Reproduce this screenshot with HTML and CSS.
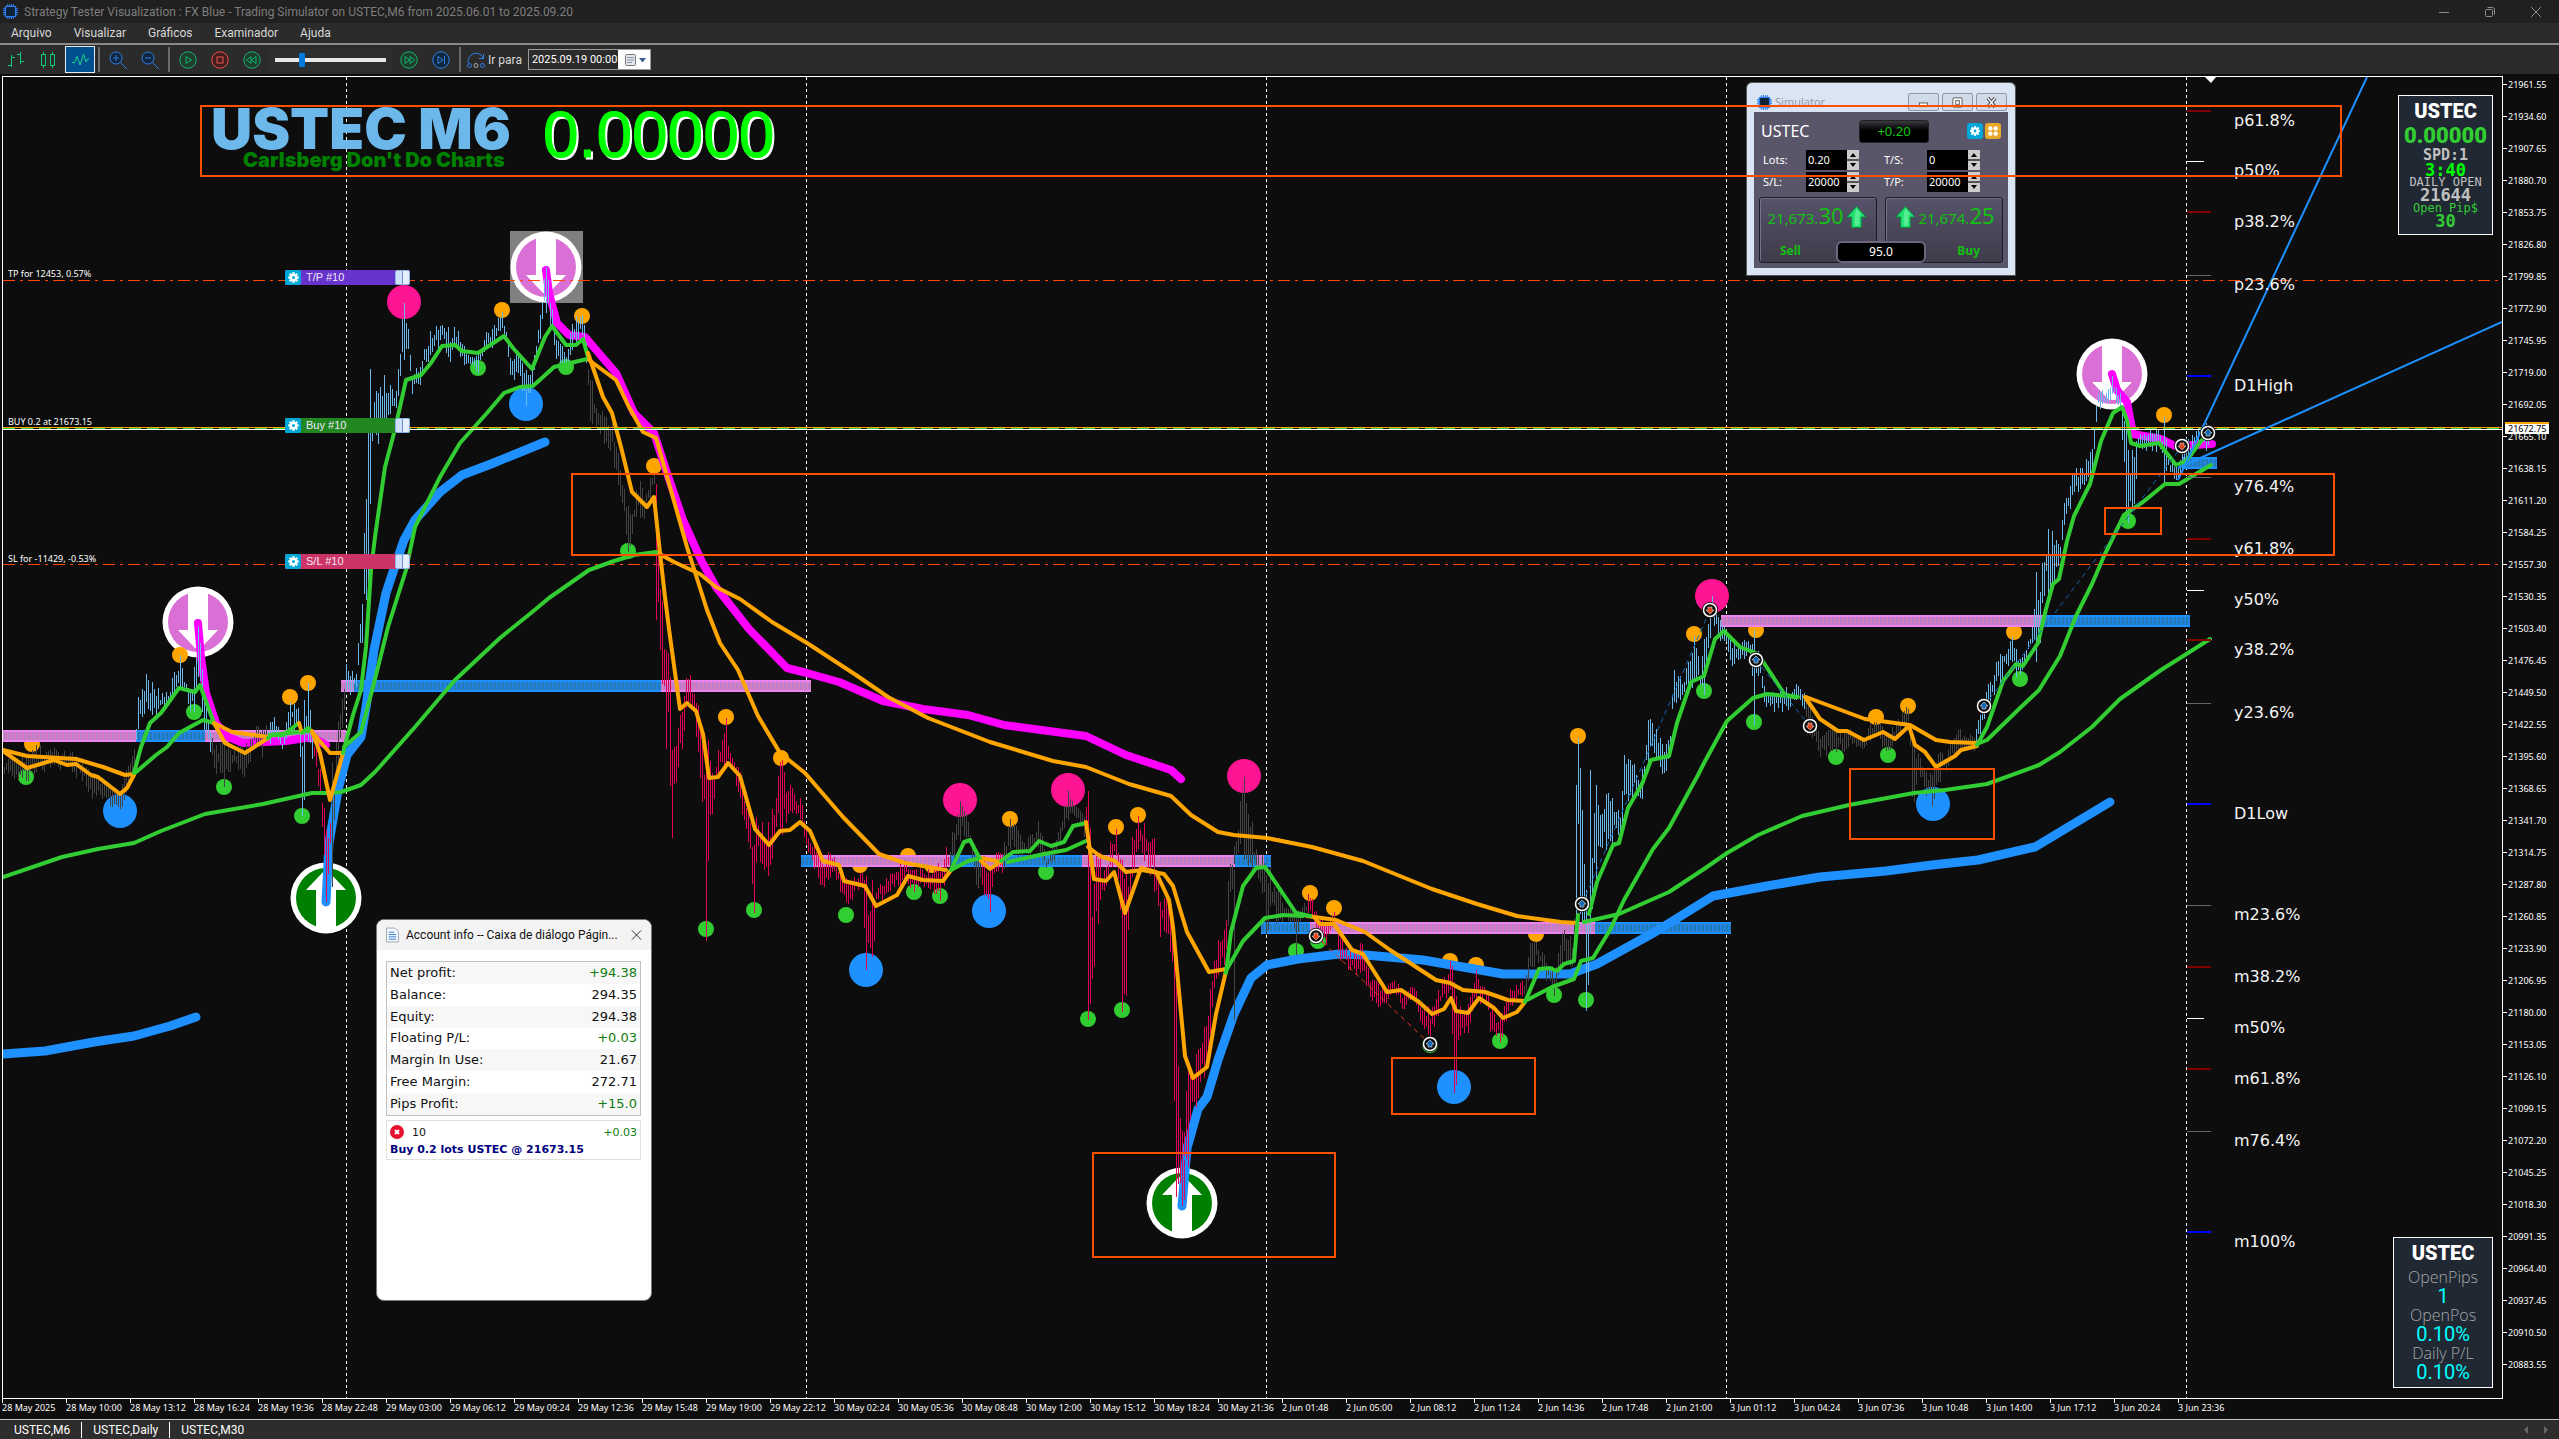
FILE: index.html
```html
<!DOCTYPE html>
<html lang="pt">
<head>
<meta charset="utf-8">
<title>Strategy Tester Visualization</title>
<link rel="stylesheet" href="styles.css">
</head>
<body>
<svg class="defs" width="0" height="0" aria-hidden="true">
  <symbol id="i-chip" viewBox="0 0 16 16"><path d="M5 0v16M7 0v16M9 0v16M11 0v16M0 5h16M0 7h16M0 9h16M0 11h16" stroke="#2f7ff0" stroke-width="1"/><rect x="2.5" y="2.500" width="11" height="11" rx="1" fill="#0d2238" stroke="#2f7ff0" stroke-width="1.500"/></symbol>
  <symbol id="i-gear" viewBox="0 0 16 16"><path d="M8 2.500v11M2.500 8h11M4 4l8 8M12 4l-8 8" stroke="#fff" stroke-width="2.600"/><circle cx="8" cy="8" r="3.800" fill="#fff"/><circle cx="8" cy="8" r="1.600" fill="#00a8d8"/></symbol>
  <symbol id="i-down" viewBox="-36 -36 72 72"><circle r="35.500" fill="#fff"/><circle r="30" fill="#da70d6"/><path d="M-10-34H10V8H20L3 26H-3L-20 8H-10Z" fill="#fff"/></symbol>
  <symbol id="i-up" viewBox="-36 -36 72 72"><circle r="35.500" fill="#fff"/><circle r="30" fill="#008000"/><path d="M-10 34H10V-8H20L3-26H-3L-20-8H-10Z" fill="#fff"/></symbol>
  <symbol id="i-price" viewBox="0 0 22 24"><path d="M11 1L21 12H16V23H6V12H1Z" fill="#1fe070" stroke="#0c8a3c"/><path d="M11 3L16 9H14V21H9V10Z" fill="#7df5a8" opacity=".6"/></symbol>
</svg>

<header class="titlebar">
  <svg class="app-icon"><use href="#i-chip"/></svg>
  <h1>Strategy Tester Visualization : FX Blue - Trading Simulator on USTEC,M6 from 2025.06.01 to 2025.09.20</h1>
  <div class="window-buttons">
    <button type="button" aria-label="Minimizar"><svg viewBox="0 0 12 12"><path d="M1 6.500h10"/></svg></button>
    <button type="button" aria-label="Restaurar"><svg viewBox="0 0 12 12"><rect x="1.500" y="3.500" width="7" height="7" rx="1"/><path d="M3.500 1.500h5a2 2 0 0 1 2 2v5"/></svg></button>
    <button type="button" aria-label="Fechar"><svg viewBox="0 0 12 12"><path d="M1 1l10 10M11 1L1 11"/></svg></button>
  </div>
</header>

<nav class="menu">
  <a href="#">Arquivo</a><a href="#">Visualizar</a><a href="#">Gráficos</a><a href="#">Examinador</a><a href="#">Ajuda</a>
</nav>

<div class="toolbar">
  <button type="button" class="tool" aria-label="Barras"><svg viewBox="0 0 20 20" stroke="#0fc97a"><path d="M5.500 5v12M2 15.500h3M5.500 7.500H9M14.500 2v12M11 4.500h3M14.500 11.500H18"/></svg></button>
  <button type="button" class="tool" aria-label="Velas"><svg viewBox="0 0 20 20" stroke="#0fc97a"><path d="M5.500 2v16M14.500 2v16"/><rect x="3.500" y="4.500" width="4" height="11" fill="#2b2b2b"/><rect x="12.500" y="4.500" width="4" height="11" fill="#2b2b2b"/></svg></button>
  <button type="button" class="tool active" aria-label="Linha"><svg viewBox="0 0 20 20" stroke="#1ed08a"><path d="M2 12.500h2.500L7 6.500 10 15 13.500 4.500 16 12l1.500-3H19"/></svg></button>
  <i class="sep"></i>
  <button type="button" class="tool" aria-label="Ampliar"><svg viewBox="0 0 20 20" stroke="#2f7fe8"><circle cx="8" cy="8" r="6" fill="#10263c"/><path d="M5 8h6M8 5v6M12.500 12.500L19 19"/></svg></button>
  <button type="button" class="tool" aria-label="Reduzir"><svg viewBox="0 0 20 20" stroke="#2f7fe8"><circle cx="8" cy="8" r="6" fill="#10263c"/><path d="M5 8h6M12.500 12.500L19 19"/></svg></button>
  <i class="sep"></i>
  <button type="button" class="tool" aria-label="Iniciar"><svg viewBox="0 0 20 20" stroke="#12b56e"><circle cx="10" cy="10" r="8.200" fill="#1f3d2c"/><path d="M8 6.500v7l5.500-3.500z"/></svg></button>
  <button type="button" class="tool" aria-label="Parar"><svg viewBox="0 0 20 20" stroke="#f0524f"><circle cx="10" cy="10" r="8.200" fill="#40201f"/><rect x="7" y="7" width="6" height="6"/></svg></button>
  <button type="button" class="tool" aria-label="Mais lento"><svg viewBox="0 0 20 20" stroke="#12b56e"><circle cx="10" cy="10" r="8.200" fill="#1f3d2c"/><path d="M9 6.500v7L4.500 10zM14 6.500v7L9.500 10z"/></svg></button>
  <label class="speed"><input type="range" min="0" max="100" value="23" aria-label="Velocidade"></label>
  <button type="button" class="tool" aria-label="Mais rápido"><svg viewBox="0 0 20 20" stroke="#12b56e"><circle cx="10" cy="10" r="8.200" fill="#1f3d2c"/><path d="M6 6.500v7l4.500-3.500zM11 6.500v7l4.500-3.500z"/></svg></button>
  <button type="button" class="tool" aria-label="Até o fim"><svg viewBox="0 0 20 20" stroke="#2f7fe8"><circle cx="10" cy="10" r="8.200" fill="#10263c"/><path d="M7 6.500v7l5-3.500zM13.500 6v8"/></svg></button>
  <i class="sep"></i>
  <label class="goto" for="goto"><svg viewBox="0 0 20 20" stroke="#2f7fe8" fill="none"><path d="M2 13C2 1 15 1 17 8M17.500 4v4.500H13"/><circle cx="3.500" cy="15.500" r="2"/><circle cx="10" cy="15.500" r="2" stroke="#aaa"/><circle cx="16.500" cy="15.500" r="2"/></svg>Ir para</label>
  <span class="datebox"><input id="goto" type="text" value="2025.09.19 00:00"><button type="button" aria-label="Calendário"><svg viewBox="0 0 30 18"><rect x="6.500" y="3.500" width="10" height="11" rx="1" fill="#e4e8ee" stroke="#777"/><path d="M8 6.500h7M8 9h7M8 11.500h5" stroke="#8a93a0"/><path d="M20 7h7l-3.500 4.500z" fill="#3b5f95"/></svg></button></span>
</div>

<main class="chart">
  <section class="plot">
    <svg class="canvas" viewBox="3 77 2499 1321" id="canvas">
      <defs>
        <pattern id="hatch-pink" width="4" height="12" patternUnits="userSpaceOnUse"><rect width="4" height="12" fill="#cf7fd2"/><path d="M1 0v12" stroke="#a67fc9"/><path d="M3 0v12" stroke="#dd7aae"/></pattern>
        <pattern id="hatch-blue" width="4" height="12" patternUnits="userSpaceOnUse"><rect width="4" height="12" fill="#2078cc"/><path d="M1 0v12" stroke="#1e90ff"/><path d="M3 0v12" stroke="#2a7f9c"/></pattern>
      </defs>
      <path class="day" d="M346.500 77V1398M806.500 77V1398M1266.500 77V1398M1726.500 77V1398M2186.500 77V1398"/>
      <path d="M2205 77h11l-5 6z" fill="#fff"/>
      <rect x="510" y="231" width="73" height="72" fill="#808080"/>
      <g id="signals">
        <use href="#i-down" x="162" y="586" width="72" height="72"/>
        <use href="#i-down" x="510" y="231" width="72" height="72"/>
        <use href="#i-down" x="2076" y="338" width="72" height="72"/>
        <use href="#i-up" x="290" y="862" width="72" height="72"/>
        <use href="#i-up" x="1146" y="1167" width="72" height="72"/>
      </g>
      <path class="stop" d="M3 280.500H2502M3 564.500H2502"/>
      <g id="dots"></g>
      <g id="bands"></g>
      <g id="blue-back" class="trend"></g>
      <g id="wicks"></g>
      <g id="averages" class="avg"></g>
      <path d="M3 427.500H2502" stroke="#ffa500"/><path d="M3 428.500H2502" stroke="#32cd32" stroke-dasharray="12 6"/><path d="M3 429.500H2502" stroke="#fff"/>
      <path d="M2178 480L2367 77M2178 468L2502 322" stroke="#1e90ff" stroke-width="2"/>
      <path d="M1316 936L1430 1044" stroke="#e0401a" stroke-dasharray="5 4"/>
      <path d="M1582 904L1710 610M1756 660L1810 726M1984 706L2182 446" stroke="#1464b4" stroke-dasharray="5 4"/>
      <g id="trades"></g>
      <g id="levels" class="levels"></g>
      <g class="note">
        <text x="8" y="277">TP for 12453, 0.57%</text>
        <text x="8" y="425">BUY 0.2 at 21673.15</text>
        <text x="8" y="562">SL for -11429, -0.53%</text>
      </g>
      <text class="symbol" x="211" y="149">USTEC M6</text>
      <text class="motto" x="243" y="167">Carlsberg Don't Do Charts</text>
      <text class="points points-back" x="545" y="159">0.00000</text>
      <text class="points" x="543" y="157">0.00000</text>
    </svg>

    <div class="order order-tp"><button type="button" aria-label="Opções"><svg><use href="#i-gear"/></svg></button><span>T/P #10</span><i></i></div>
    <div class="order order-buy"><button type="button" aria-label="Opções"><svg><use href="#i-gear"/></svg></button><span>Buy #10</span><i></i></div>
    <div class="order order-sl"><button type="button" aria-label="Opções"><svg><use href="#i-gear"/></svg></button><span>S/L #10</span><i></i></div>

    <aside class="panel panel-top">
      <b class="head">USTEC</b><b class="pts">0.00000</b><b class="spd">SPD:1</b><b class="clock">3:40</b><span class="small">DAILY OPEN</span><b class="open">21644</b><span class="small green">Open Pip$</span><b class="open green">30</b>
    </aside>

    <aside class="panel panel-bottom">
      <b class="head">USTEC</b><span class="name">OpenPips</span><span class="lcd">1</span><span class="name">OpenPos</span><span class="lcd">0.10%</span><span class="name">Daily P/L</span><span class="lcd">0.10%</span>
    </aside>

    <section class="sim">
      <header><svg class="app-icon"><use href="#i-chip"/></svg><h2>Simulator</h2>
        <button type="button" aria-label="Minimizar"><svg viewBox="0 0 12 12"><rect x="1.500" y="6.500" width="9" height="4" fill="#fff" stroke="#555"/></svg></button>
        <button type="button" aria-label="Maximizar"><svg viewBox="0 0 12 12"><rect x="1" y="1" width="10" height="10" fill="#fff" stroke="#555" rx="1"/><rect x="4" y="4" width="4" height="4" fill="#fff" stroke="#555"/></svg></button>
        <button type="button" aria-label="Fechar"><svg viewBox="0 0 12 12"><path d="M2 1l8 10M10 1L2 11" stroke="#555" stroke-width="4"/><path d="M2 1l8 10M10 1L2 11" stroke="#fff" stroke-width="1.500"/></svg></button>
      </header>
      <form class="sim-body">
        <div class="sim-top"><strong>USTEC</strong><output>+0.20</output><button type="button" class="opt" aria-label="Opções"><svg><use href="#i-gear"/></svg></button><button type="button" class="opt grid" aria-label="Grade"><svg viewBox="0 0 16 16"><circle cx="5" cy="5" r="2.500"/><circle cx="11" cy="5" r="2.500"/><circle cx="5" cy="11" r="2.500"/><circle cx="11" cy="11" r="2.500"/></svg></button></div>
        <div class="sim-fields">
          <label for="lots">Lots:</label><span class="spin"><input id="lots" type="text" value="0.20"><svg viewBox="0 0 12 20"><path d="M0 0h12v9H0zM0 11h12v9H0z" fill="#ccc"/><path d="M6 3l3 4H3zM6 17l3-4H3z" fill="#000"/></svg></span>
          <label for="ts">T/S:</label><span class="spin"><input id="ts" type="text" value="0"><svg viewBox="0 0 12 20"><path d="M0 0h12v9H0zM0 11h12v9H0z" fill="#ccc"/><path d="M6 3l3 4H3zM6 17l3-4H3z" fill="#000"/></svg></span>
          <label for="sl">S/L:</label><span class="spin"><input id="sl" type="text" value="20000"><svg viewBox="0 0 12 20"><path d="M0 0h12v9H0zM0 11h12v9H0z" fill="#ccc"/><path d="M6 3l3 4H3zM6 17l3-4H3z" fill="#000"/></svg></span>
          <label for="tp">T/P:</label><span class="spin"><input id="tp" type="text" value="20000"><svg viewBox="0 0 12 20"><path d="M0 0h12v9H0zM0 11h12v9H0z" fill="#ccc"/><path d="M6 3l3 4H3zM6 17l3-4H3z" fill="#000"/></svg></span>
        </div>
        <div class="sim-deal">
          <button type="button" class="sell"><span class="quote">21,673.<big>30</big><svg><use href="#i-price"/></svg></span><b>Sell</b></button>
          <button type="button" class="buy"><span class="quote"><svg><use href="#i-price"/></svg>21,674.<big>25</big></span><b>Buy</b></button>
          <output class="spread">95.0</output>
        </div>
      </form>
    </section>

    <section class="account">
      <header><svg viewBox="0 0 14 16"><path d="M.5.500h9l4 4v11H.5z" fill="#f4f8fc" stroke="#9aa4ae"/><path d="M3 5h6M3 7.500h8M3 10h8M3 12.500h8" stroke="#2a78c8"/></svg><h2>Account info -- Caixa de diálogo Págin...</h2><button type="button" aria-label="Fechar"><svg viewBox="0 0 12 12"><path d="M1 1l10 10M11 1L1 11" stroke="#222"/></svg></button></header>
      <table>
        <tr><th>Net profit:</th><td class="up">+94.38</td></tr>
        <tr><th>Balance:</th><td>294.35</td></tr>
        <tr><th>Equity:</th><td>294.38</td></tr>
        <tr><th>Floating P/L:</th><td class="up">+0.03</td></tr>
        <tr><th>Margin In Use:</th><td>21.67</td></tr>
        <tr><th>Free Margin:</th><td>272.71</td></tr>
        <tr><th>Pips Profit:</th><td class="up">+15.0</td></tr>
      </table>
      <div class="position"><p><svg viewBox="0 0 14 14"><circle cx="7" cy="7" r="7" fill="#e8112d"/><path d="M5 5l4 4M9 5l-4 4" stroke="#fff" stroke-width="2"/></svg><span>10</span><em>+0.03</em></p><b>Buy 0.2 lots USTEC @ 21673.15</b></div>
    </section>

    <svg class="canvas zones" viewBox="3 77 2499 1321"><g id="zones"></g></svg>
  </section>
  <div class="prices"><ol id="prices"></ol><span class="last">21672.75</span></div>
  <ol class="times" id="times"></ol>
</main>

<footer class="tabs"><a href="#">USTEC,M6</a><a href="#">USTEC,Daily</a><a href="#">USTEC,M30</a><span class="arrows"><button type="button" aria-label="Anterior"><svg viewBox="0 0 6 8"><path d="M5 0v8L1 4z"/></svg></button><button type="button" aria-label="Próximo"><svg viewBox="0 0 6 8"><path d="M1 0v8l4-4z"/></svg></button></span></footer>
<script src="chart.js"></script>
</body>
</html>
```

FILE: styles.css
```css
* { box-sizing: border-box; }
html, body { height: 100%; }
body { margin: 0; display: flex; flex-direction: column; background: #0d0d0d; color: #fff; font: 12px/16px Roboto, "Open Sans", sans-serif; overflow: hidden; }
button { border: 0; padding: 0; margin: 0; background: none; color: inherit; font: inherit; display: flex; align-items: center; justify-content: center; }
input { font: inherit; color: inherit; border: 0; padding: 0; margin: 0; min-width: 0; }
h1, h2, p, ol { margin: 0; padding: 0; font: inherit; list-style: none; }
a { color: inherit; text-decoration: none; }
svg { fill: none; display: block; flex: none; }
.defs { position: absolute; }

.titlebar { height: 23px; flex: none; display: flex; align-items: center; gap: 6px; padding-left: 3px; background: #202020; color: #7d7d7d; }
.app-icon { width: 15px; height: 15px; }
.titlebar h1 { flex: 1; }
.window-buttons { display: flex; }
.window-buttons button { width: 46px; height: 20px; }
.window-buttons svg { width: 12px; height: 12px; stroke: #8c8c8c; }
.menu { height: 20px; flex: none; display: flex; gap: 22px; padding: 2px 11px; background: #2b2b2b; color: #d8d8d8; }
.toolbar { height: 31px; flex: none; display: flex; align-items: center; padding-left: 1px; gap: 2px; background: #2b2b2b; border-top: 2px solid #8a8a8a; }
.tool { width: 30px; height: 27px; }
.tool svg { width: 20px; height: 20px; }
.tool.active { background: #00508f; border: 1px solid #e8e8e8; }
.sep { width: 2px; height: 25px; background: #6a6a6a; margin: 0 1px; }
.speed { width: 123px; padding: 0 6px; display: flex; align-items: center; background: #2e2e2e; height: 22px; }
.speed input { appearance: none; width: 111px; height: 14px; background: none; }
.speed input::-webkit-slider-runnable-track { height: 4px; background: #e6e6e6; }
.speed input::-webkit-slider-thumb { appearance: none; width: 6px; height: 14px; margin-top: -5px; background: #0078d7; }
.goto { display: flex; align-items: center; gap: 2px; margin: 0 4px 0 2px; color: #d8d8d8; }
.goto svg { width: 20px; height: 20px; }
.datebox { display: flex; width: 123px; height: 21px; border: 1px solid #9a9a9a; }
.datebox input { flex: 1; padding-left: 3px; background: #2b2b2b; font-size: 11px; }
.datebox button { width: 32px; background: #fff; }
.datebox svg { width: 30px; height: 18px; }

.chart { flex: 1; min-height: 0; display: grid; grid-template: minmax(0, 1fr) 20px / minmax(0, 1fr) 56px; padding: 2px 0 0 2px; font: 9px/17px "Noto Sans", sans-serif; }
.plot { position: relative; border: 1px solid #fff; overflow: hidden; }
.canvas { width: 100%; height: 100%; }
.zones { position: absolute; inset: 0; pointer-events: none; }
.day { stroke: #fff; stroke-dasharray: 3 3; }
.stop { stroke: #ff4500; stroke-dasharray: 12 5 3 5; }
.trend path { stroke: #1e90ff; stroke-width: 9; stroke-linecap: round; stroke-linejoin: round; }
.trend .sell-trend { stroke: #f0f; stroke-width: 8; }
.avg path { stroke-width: 4; stroke-linejoin: round; stroke-linecap: round; }
.avg .rise { stroke: #32cd32; }
.avg .fall { stroke: #ffa500; }
.levels text { font: 16px "DejaVu Sans", sans-serif; fill: #f4f4f4; }
.note text { font: 9px "Noto Sans", sans-serif; fill: #fff; }
.symbol { font: 900 57px Inter, sans-serif; fill: #6cb8ea; }
.motto { font: 900 20px Inter, sans-serif; fill: #008000; }
.points { font: 64px "Liberation Sans", sans-serif; fill: #0f0; stroke: #0f0; }
.points-back { fill: #fff; stroke: #fff; }

.order { position: absolute; left: 282px; width: 125px; height: 15px; display: flex; font: 11px/15px "Liberation Sans", sans-serif; color: #f0e8f8; }
.order button { width: 16px; background: #00a8d8; border-radius: 2px; }
.order svg { width: 15px; height: 15px; }
.order span { flex: 1; padding-left: 5px; }
.order i { width: 15px; border: 1px solid #8fb0e8; border-radius: 2px; background: linear-gradient(90deg, #cfe0fa 6px, #6d8fd0 6px 7px, #e4eefc 7px); }
.order-tp { top: 193px; background: #6633cc; }
.order-buy { top: 341px; background: #218721; }
.order-sl { top: 477px; background: #cc3366; }

.panel { position: absolute; display: flex; flex-direction: column; align-items: center; background: #1f2833; border: 1px solid #fff; white-space: nowrap; color: #c0c0c0; font-family: "DejaVu Sans Mono", monospace; }
.panel-top { right: 9px; top: 18px; width: 95px; height: 140px; font-size: 15px; }
.panel-bottom { right: 9px; bottom: 10px; width: 100px; height: 151px; }
.head { font: 900 20px/30px Roboto, sans-serif; color: #fff; }
.pts { font: 900 22px/20px Roboto, sans-serif; color: #32cd32; }
.spd { line-height: 18px; }
.clock { font-size: 17px; line-height: 12px; color: #0f0; }
.small { font-size: 12px; line-height: 13px; }
.open { font-size: 17px; line-height: 13px; }
.panel .green { color: #32cd32; }
.name { font: 300 16px/18px "Open Sans", sans-serif; color: #a8a8a8; }
.lcd { font: 20px/20px Roboto, sans-serif; color: #0ff; }

.sim { position: absolute; left: 1743px; top: 5px; width: 270px; height: 194px; padding: 0 7px 7px; background: #d9e5f2; border: 1px solid #555; border-radius: 6px 6px 0 0; display: flex; flex-direction: column; font: 11px/14px "Noto Sans", sans-serif; }
.sim header { height: 30px; display: flex; align-items: center; gap: 3px; padding: 9px 1px 0 3px; }
.sim h2 { flex: 1; font-size: 11px; color: #909ba8; }
.sim header button { width: 31px; height: 18px; border: 1px solid #8d99a8; border-radius: 2px; background: #cfdbe8; }
.sim header button svg { width: 11px; height: 11px; }
.sim-body { flex: 1; margin: 0; padding: 7px 5px 5px; background: #5a566a; display: flex; flex-direction: column; }
.sim-top { display: flex; align-items: center; height: 24px; padding: 0 2px; gap: 2px; }
.sim-top strong { width: 96px; font: 16px/20px "Noto Sans", sans-serif; }
.sim-top output { width: 70px; height: 23px; margin-right: auto; border: 1px solid #222; border-radius: 3px; background: linear-gradient(#3a3a40, #000 45%); color: #12c012; text-align: center; font: 13px/21px "Noto Sans", sans-serif; }
.opt { width: 16px; height: 16px; border-radius: 3px; background: #00a8d8; }
.opt.grid { background: #e8a828; }
.opt svg { width: 14px; height: 14px; }
.opt.grid svg { fill: #fff; }
.sim-fields { display: grid; grid-template-columns: 43px 78px 43px 1fr; gap: 2px 0; padding: 7px 3px 0 4px; align-items: center; line-height: 20px; }
.spin { display: flex; width: 53px; height: 20px; background: #555; }
.spin input { width: 41px; padding-left: 2px; background: #000; font-size: 11px; }
.spin svg { width: 12px; height: 20px; }
.sim-deal { position: relative; display: flex; gap: 8px; margin-top: 5px; height: 66px; }
.sim-deal > button { flex: 1; flex-direction: column; justify-content: space-between; padding: 3px 4px 3px; border: 1px solid #1c1a26; border-radius: 3px; background: linear-gradient(#56526a, #3f3b4a); color: #12c012; box-shadow: inset 1px 1px #77728c; }
.quote { display: flex; align-items: baseline; font: 15px/28px "Noto Sans", sans-serif; white-space: nowrap; }
.quote big { font-size: 22px; }
.quote svg { width: 21px; height: 24px; align-self: center; margin: 0 2px; }
.sim-deal b { font-size: 12px; line-height: 16px; }
.sell b { align-self: flex-start; margin-left: 16px; }
.buy b { align-self: flex-end; margin-right: 18px; }
.spread { position: absolute; left: 50%; bottom: 0; width: 90px; height: 22px; margin-left: -45px; border: 2px solid #6a6680; border-radius: 6px; background: #000; text-align: center; font: 12px/18px "Noto Sans", sans-serif; }

.account { position: absolute; left: 373px; top: 842px; width: 276px; height: 382px; background: #fff; border: 1px solid #777; border-radius: 8px; color: #111; overflow: hidden; font: 13px/20px "DejaVu Sans", sans-serif; }
.account header { height: 30px; display: flex; align-items: center; padding: 0 9px; background: #f3f3f3; font: 12px/16px Roboto, sans-serif; }
.account header h2 { flex: 1; margin-left: 7px; white-space: nowrap; }
.account header svg { width: 13px; height: 16px; }
.account header button svg { width: 11px; height: 12px; }
.account table { width: 255px; height: 155px; margin: 11px 9px 4px; border: 1px solid #c0c0c0; border-collapse: collapse; }
.account tr:nth-child(odd) { background: #f7f7f7; }
.account th, .account td { padding: 0 3px; font-weight: normal; text-align: left; }
.account td { text-align: right; }
.account .up, .position em { color: #107c10; }
.position { width: 255px; height: 40px; margin-left: 9px; padding: 2px 3px; border: 1px solid #e0e0e0; font-size: 11px; line-height: 17px; }
.position p { display: flex; align-items: center; gap: 8px; height: 18px; }
.position svg { width: 14px; height: 14px; }
.position em { margin-left: auto; font-style: normal; }
.position b { color: #000080; white-space: nowrap; }

.prices { position: relative; overflow: hidden; }
.prices li { height: 32px; display: flex; }
.prices li::before { content: ""; width: 4px; height: 1px; margin: 8px 1px 0 0; background: #fff; }
.last { position: absolute; left: 2px; top: 346px; width: 44px; height: 12px; padding-left: 3px; border-top: 2px solid #ffa500; background: #fff; color: #000; line-height: 10px; }
.times { grid-column: 1 / -1; display: flex; overflow: hidden; }
.times li { flex: none; width: 64px; white-space: nowrap; background: linear-gradient(#fff, #fff) 0 0 / 1px 4px no-repeat; }

.tabs { height: 20px; flex: none; display: flex; align-items: center; border-top: 1px solid #c8c8c8; background: #2d2d2d; padding-left: 3px; }
.tabs a { padding: 0 11px; }
.tabs a + a { border-left: 1px solid #fff; }
.arrows { margin-left: auto; display: flex; gap: 14px; padding-right: 10px; }
.arrows svg { width: 6px; height: 8px; fill: #666; }
```

FILE: chart.js
```js
const byId = id => document.getElementById(id);
const fill = (id, html) => { byId(id).innerHTML = html; };

// Price scale: one label every 26.95 points.
fill("prices", Array.from({ length: 41 }, (_, i) => `<li>${(21961.55 - 26.95 * i).toFixed(2)}</li>`).join(""));

fill("times", ("28 May 2025|28 May 10:00|28 May 13:12|28 May 16:24|28 May 19:36|28 May 22:48|29 May 03:00|29 May 06:12|29 May 09:24|29 May 12:36|29 May 15:48|29 May 19:00|29 May 22:12|30 May 02:24|30 May 05:36|30 May 08:48|30 May 12:00|30 May 15:12|30 May 18:24|30 May 21:36|2 Jun 01:48|2 Jun 05:00|2 Jun 08:12|2 Jun 11:24|2 Jun 14:36|2 Jun 17:48|2 Jun 21:00|3 Jun 01:12|3 Jun 04:24|3 Jun 07:36|3 Jun 10:48|3 Jun 14:00|3 Jun 17:12|3 Jun 20:24|3 Jun 23:36").split("|").map(t => `<li>${t}</li>`).join(""));

// Daily levels: label, y, tick colour.
const levels = [["p61.8%",110,"#800000"],["p50%",161,"#fff"],["p38.2%",211,"#800000"],["p23.6%",275,"#666"],["D1High",375,"#00f"],["y76.4%",477,"#666"],["y61.8%",538,"#800000"],["y50%",590,"#fff"],["y38.2%",639,"#800000"],["y23.6%",703,"#666"],["D1Low",803,"#00f"],["m23.6%",905,"#666"],["m38.2%",966,"#800000"],["m50%",1018,"#fff"],["m61.8%",1068,"#800000"],["m76.4%",1131,"#666"],["m100%",1231,"#00f"]];
fill("levels", levels.map(([t, y, c]) => {
  const thin = c === "#fff" || c === "#666";
  return `<rect x="2187" y="${y}" width="${c === "#fff" ? 17 : 24}" height="${thin ? 1 : 2}" fill="${c}"/><text x="2234" y="${y + (thin ? 15 : 16)}">${t}</text>`;
}).join(""));

const dots = {
  "#ff1493 17": "404,302 960,800 1068,790 1244,776 1712,596",
  "#1e90ff 17": "120,811 526,404 866,970 989,911 1454,1087 1933,804",
  "#ffa500 8": "32,744 180,655 290,697 308,683 502,310 582,316 654,466 726,717 781,758 860,865 908,856 932,865 1010,819 1116,827 1138,815 1310,893 1334,908 1450,961 1476,965 1536,934 1578,736 1694,634 1756,630 1876,717 1908,706 2014,632 2164,415",
  "#32cd32 8": "26,777 194,712 224,787 302,816 478,368 566,367 628,551 706,929 754,910 846,915 914,892 940,896 1046,872 1088,1019 1122,1010 1296,951 1318,941 1430,1045 1500,1041 1554,995 1586,1000 1704,691 1754,722 1836,757 1888,755 2020,679 2128,521"
};
fill("dots", Object.entries(dots).map(([k, pts]) => {
  const [color, r] = k.split(" ");
  return pts.split(" ").map(p => `<circle cx="${p.split(",")[0]}" cy="${p.split(",")[1]}" r="${r}" fill="${color}"/>`).join("");
}).join(""));

// Bands: top, start x, then colour and end x of each part.
const bands = [[730,12,3,"p136 b205 p346"],[680,12,341,"p354 b661 p811"],[855,12,801,"b813 p950 b980 p1003 b1082 p1235 b1257 p1264 b1271"],[922,12,1261,"b1310 p1595 b1731"],[615,12,1721,"p2044 b2190"],[457,12,2182,"b2217"]];
fill("bands", bands.map(([y, h, x, parts]) => parts.split(" ").map(p => {
  const end = +p.slice(1), w = end - x, pink = p[0] === "p";
  const s = `<rect x="${x}" y="${y}" width="${w}" height="${h}" fill="${pink ? "#ee82ee" : "#1e90ff"}"/><rect x="${x}" y="${y + 2}" width="${w}" height="${h - 4}" fill="url(#hatch-${pink ? "pink" : "blue"})"/>`;
  x = end;
  return s;
}).join("")).join(""));

const line = (pts, cls) => `<path class="${cls || ""}" d="M${pts}"/>`;
fill("blue-back", [
  "198,623 201,657 206,693 216,723 228,737 243,743 286,741 312,737 326,745",
  "546,270 549,293 557,323 569,335 585,337 603,358 616,373 634,413 654,433 667,473 683,520 702,562 716,587 749,629 787,668 807,673 839,682 883,701 923,709 968,715 1004,725 1086,736 1126,755 1171,770 1181,779",
  "2112,374 2117,390 2127,402 2133,434 2161,439 2175,446 2212,444"
].map(p => line(p, "sell-trend")).concat([
  "3,1054 45,1051 94,1042 134,1036 170,1026 196,1017",
  "326,902 329,843 338,790 347,755 361,737 366,707 374,650 386,593 395,566 404,540 415,520 440,492 462,475 491,464 545,442",
  "1182,1206 1187,1148 1198,1109 1207,1097 1218,1060 1234,1014 1251,978 1267,965 1298,959 1339,954 1365,955 1423,960 1503,974 1570,974 1597,964 1655,932 1713,896 1767,886 1820,877 1886,871 1932,865 1978,860 2035,847 2110,802"
].map(p => line(p))).join(""));

const averages = [
  "f656,552 674,562 700,574 716,587 740,599 772,622 807,643 856,675 888,697 928,718 990,742 1053,761 1086,767 1129,784 1171,796 1191,815 1218,832 1234,835 1267,838 1312,847 1363,861 1432,889 1477,904 1517,916 1561,922 1577,923",
  "r3,877 62,857 98,849 134,843 161,831 205,814 263,804 312,793 330,793 341,792 361,785 375,772 415,727 455,680 500,638 531,613 549,598 589,570 614,561 634,555 656,552",
  "r1584,922 1619,914 1669,892 1704,869 1727,853 1758,835 1802,816 1849,805 1914,793 1945,790 1987,784 2039,765 2060,752 2092,727 2120,699 2161,670 2188,653 2210,639",
  "f3,750 27,756 76,759 103,767 125,775 134,774",
  "r135,773 156,755 167,747 179,733 203,720 214,723",
  "f214,723 232,732 268,737",
  "r270,735 308,731",
  "f312,732 330,753 343,753",
  "r344,747 361,732 374,683 388,627 406,570 415,527 440,477 460,443 487,413 504,393 520,387 533,386 554,367 587,359",
  "f589,360 616,380 629,407 643,432 656,438 670,487 687,547 707,610 720,643 738,670 758,716 780,753 805,773 843,817 879,854 905,863 946,870",
  "r951,870 968,861 981,858",
  "f981,858 1001,862",
  "r1008,862 1044,854 1066,850 1086,841",
  "f1088,847 1100,856 1115,861 1126,872 1142,870 1164,874 1173,886 1187,932 1209,972 1226,969",
  "r1227,969 1243,941 1265,918 1283,915 1303,916",
  "f1307,916 1336,920 1365,932 1390,950 1436,980 1450,983 1463,990 1485,992 1508,1000 1525,1001",
  "r1525,1001 1552,987 1574,979 1581,961 1593,958 1610,930 1624,900 1653,849 1669,828 1698,775 1704,763 1727,721 1753,698 1767,694 1796,697",
  "f1806,697 1865,719 1910,725 1936,740 1950,742 1977,743",
  "r1977,744 1987,740 2019,709 2039,690 2060,656 2076,616 2092,584 2104,556 2124,515 2143,502 2165,484 2179,484 2211,465",
  "f3,751 27,768 54,760 67,765 76,764 91,775 98,777 120,794 127,788 134,775",
  "r134,773 141,747 150,723 161,713 179,688 195,692 200,685 214,723",
  "f214,723 225,743 245,753 268,738",
  "r268,738 272,735 283,735 299,723",
  "f299,723 302,733",
  "r302,733 308,728 312,732",
  "f312,731 320,753 330,800 343,753",
  "r343,753 353,715 361,690 366,647 371,570 375,537 385,467 394,433 400,407 406,380 421,375 431,363 442,346 455,345 462,351 478,353 504,336 513,348 532,369 545,337 552,326 566,345 576,345 583,339 588,357",
  "f588,353 603,397 612,413 621,447 632,492 647,507 654,497 660,553 665,597 669,629 680,709 687,703 696,711 703,734 709,778 718,777 728,763 740,776 755,829 769,845 780,831 790,830 800,822 810,831 823,861 839,865 844,881 865,886 876,906 897,895 908,876 923,880 943,881 951,870",
  "r951,870 964,842 970,840 981,861",
  "f981,861 990,869 1001,861",
  "r1001,861 1013,852 1030,851 1039,841 1051,846 1064,842 1073,826 1086,823",
  "f1086,822 1094,879 1106,881 1114,872 1125,913 1141,868 1156,872 1169,900 1173,927 1185,1056 1193,1078 1207,1067 1216,1014 1226,971",
  "r1226,973 1231,932 1243,886 1256,868 1265,867 1296,913 1310,916",
  "f1314,917 1320,924 1334,924 1352,950 1363,954 1387,992 1401,990 1419,1002 1432,1014 1444,1009 1451,998 1456,1011 1468,1013 1479,998 1494,1008 1503,1018 1517,1012 1525,1002",
  "r1525,1002 1539,969 1550,968 1557,971 1564,964 1574,961 1578,915",
  "r1589,914 1597,882 1613,845 1619,843 1628,808 1642,784 1651,760 1669,756 1677,723 1691,682 1704,676 1715,639 1724,631 1740,647 1758,654 1785,695 1798,697",
  "f1805,697 1820,719 1838,731 1847,731 1864,740 1883,732 1895,739 1909,726 1915,745 1925,752 1936,767 1955,756 1961,750 1977,746",
  "r1977,745 1987,727 2003,681 2016,664 2023,666 2038,643 2046,609 2053,584 2059,579 2067,541 2074,516 2090,484 2101,441 2113,413 2122,407 2127,420 2131,443 2140,446 2159,443 2176,465 2186,461 2202,440"
];
fill("averages", averages.map(a => line(a.slice(1), a[0] === "r" ? "rise" : "fall")).join(""));

// High/low envelope of the bars: x, high, low.
const range = "3,762,775 26,750,780 40,748,775 60,750,768 80,755,778 92,775,798 105,778,800 120,790,812 128,765,790 135,735,760 137,705,740 146,672,705 155,690,715 168,690,710 180,658,682 186,680,700 193,682,716 197,630,680 200,635,700 204,690,735 213,735,775 218,745,770 224,745,786 232,750,765 245,748,780 255,725,740 262,722,755 268,725,745 275,715,735 282,738,755 289,700,725 299,705,735 303,755,820 305,720,750 308,685,740 312,730,760 320,765,800 326,830,900 330,825,850 333,770,860 336,730,790 341,690,730 346,665,700 356,675,690 361,600,650 366,500,600 370,370,520 374,380,460 380,375,430 388,385,420 396,390,410 400,340,390 404,302,360 407,320,350 412,370,395 420,365,385 424,345,370 432,330,350 442,318,345 450,330,360 455,325,350 465,350,365 478,355,372 485,335,350 495,325,345 501,312,330 506,325,345 511,360,380 518,350,375 526,375,405 531,365,390 537,335,360 545,270,310 548,275,310 555,335,355 560,345,365 566,348,370 572,325,350 581,310,330 586,335,370 589,365,415 595,405,425 605,415,445 612,425,450 617,450,490 622,475,500 628,510,552 631,520,540 637,480,510 645,490,525 650,470,500 654,465,490 657,500,600 663,620,700 668,630,760 672,745,830 678,730,770 684,680,730 688,670,700 694,690,710 700,715,780 704,750,810 706,750,928 709,770,840 716,760,780 725,720,760 730,745,765 738,765,790 744,790,830 751,820,860 753,820,910 756,820,860 765,820,870 770,820,880 776,790,840 781,758,830 786,785,820 798,795,820 806,820,845 812,840,870 822,860,890 832,850,875 838,865,885 846,880,915 855,875,890 862,870,890 866,890,968 869,890,940 873,895,955 876,885,905 880,885,900 890,875,890 907,858,880 914,870,893 925,870,885 940,865,897 950,840,870 955,820,860 960,802,840 967,815,835 975,850,880 985,860,900 989,870,910 996,850,870 1003,845,880 1010,820,850 1025,840,860 1038,822,850 1046,855,873 1055,840,860 1068,790,820 1075,805,820 1086,810,840 1089,800,1018 1092,880,980 1097,850,930 1105,860,900 1115,828,860 1119,840,900 1122,870,1010 1126,880,990 1130,850,900 1137,815,850 1143,825,860 1155,840,890 1160,890,940 1168,890,930 1173,900,1000 1177,1000,1170 1182,1130,1206 1188,1060,1160 1195,1060,1110 1203,1035,1080 1208,1020,1060 1213,940,1010 1220,940,970 1225,920,960 1229,860,910 1236,830,870 1243,778,830 1248,800,880 1256,850,870 1265,850,930 1272,880,920 1283,900,920 1293,905,920 1296,910,950 1300,905,920 1310,893,915 1318,915,940 1326,925,945 1334,905,925 1340,940,960 1351,950,975 1362,945,970 1370,975,1000 1385,985,1010 1394,980,990 1403,990,1015 1412,985,1000 1420,1000,1020 1430,1010,1040 1441,985,1005 1450,962,990 1454,970,1085 1456,980,1080 1458,1010,1040 1467,1000,1035 1476,968,1000 1485,985,1005 1491,1005,1035 1500,1020,1041 1503,1010,1035 1510,985,1005 1524,980,1000 1528,950,985 1536,935,960 1543,955,975 1554,970,995 1563,930,960 1573,940,970 1576,830,960 1578,737,860 1580,800,920 1584,860,920 1586,900,1000 1591,880,940 1596,780,850 1604,800,850 1612,790,840 1620,820,850 1624,755,800 1635,760,800 1641,780,805 1648,720,760 1657,730,760 1663,750,775 1669,740,770 1673,670,710 1683,680,700 1690,650,690 1694,635,680 1700,670,690 1704,640,690 1712,598,620 1720,610,640 1732,640,665 1750,640,655 1754,630,720 1758,640,680 1766,690,710 1776,690,710 1787,690,715 1796,685,700 1805,695,715 1812,715,740 1820,735,755 1836,730,757 1850,730,745 1860,740,750 1876,715,735 1888,735,755 1900,715,735 1908,705,730 1913,740,800 1920,755,775 1926,770,800 1932,775,805 1938,755,785 1946,750,770 1957,728,750 1966,735,750 1975,735,755 1983,700,720 1994,670,695 2003,645,675 2013,635,670 2019,660,680 2030,635,650 2037,590,660 2046,530,600 2055,540,580 2060,545,560 2065,490,530 2075,470,490 2083,470,490 2092,440,470 2098,390,410 2106,390,405 2112,375,395 2120,395,410 2126,430,500 2128,450,520 2133,440,520 2138,435,450 2150,430,450 2160,430,450 2164,416,480 2170,460,480 2178,465,480 2184,440,465 2190,440,460 2197,422,440 2207,425,450".split(" ").map(p => p.split(",").map(Number));
const SKY = "#6cb8ea", GREY = "#444444", RED = "#e0055a";
const phases = [[136,GREY],[212,SKY],[268,GREY],[314,SKY],[332,RED],[345,GREY],[588,SKY],[655,GREY],[950,RED],[981,GREY],[1003,RED],[1086,GREY],[1228,RED],[1308,GREY],[1524,RED],[1576,GREY],[1805,SKY],[1976,GREY],[2213,SKY]];
const noise = n => { const s = Math.sin(n * 127.1) * 43758.5453; return s - Math.floor(s); };
const paths = {};
const addBar = (x, top, bottom) => {
  const color = phases.find(p => x < p[0])[1];
  paths[color] = (paths[color] || "") + `M${x + 0.5} ${top}V${bottom}`;
};
let k = 0;
for (let x = 4; x < 2210; x += 2) {
  while (k < range.length - 2 && range[k + 1][0] < x) k++;
  const a = range[k], b = range[k + 1], t = Math.min(1, (x - a[0]) / (b[0] - a[0]));
  const hi = a[1] + (b[1] - a[1]) * t, lo = a[2] + (b[2] - a[2]) * t;
  // Each bar covers a varying part of the envelope, some running a little past it.
  const span = lo - hi;
  const top = Math.round(hi + (noise(x) * 0.55 - 0.12) * span);
  const bottom = Math.round(lo - (noise(x + 9) * 0.55 - 0.12) * span);
  addBar(x, top, Math.max(bottom, top + 5));
}
// Long bars that reach the swing dots.
[[180,655,690],[194,680,712],[224,745,787],[302,755,816],[304,700,800],[308,683,730],[326,830,902],[332,762,887],[368,472,622],[370,369,459],[404,303,345],[478,355,371],[502,312,328],[526,370,406],[546,270,311],[582,316,335],[628,506,552],[656,484,620],[672,750,838],[706,848,929],[708,740,861],[726,718,765],[754,847,913],[782,760,835],[866,876,970],[872,880,957],[914,870,892],[960,801,820],[990,870,912],[1010,820,850],[1068,790,820],[1088,791,1020],[1090,913,1004],[1094,890,966],[1116,829,850],[1122,860,1012],[1124,880,994],[1138,816,838],[1174,980,1101],[1176,1078,1197],[1178,1095,1184],[1182,1140,1206],[1184,1160,1200],[1234,870,1020],[1244,777,860],[1296,910,952],[1450,963,990],[1454,982,1089],[1456,1018,1085],[1500,1020,1042],[1576,785,922],[1578,738,810],[1580,768,914],[1582,810,920],[1586,890,1002],[1590,770,910],[1596,785,880],[1606,798,850],[1694,636,680],[1754,630,725],[1912,735,797],[1932,775,804],[2036,572,662],[2126,430,512],[2128,459,520],[2132,450,508],[2164,417,486]].forEach(b => addBar(...b));
fill("wicks", Object.entries(paths).map(([c, d]) => `<path d="${d}" stroke="${c}"/>`).join(""));

// Executed deals: x, y, direction.
const deals = [[1316,936,-1],[1430,1044,1],[1582,904,1],[1710,610,-1],[1756,660,1],[1810,726,-1],[1984,706,1],[2182,446,-1],[2208,433,1]];
fill("trades", deals.map(([x, y, dir]) => `<g transform="translate(${x} ${y})"><circle r="8" fill="#0d0d0d"/><circle r="6.500" fill="#0d0d0d" stroke="#fff" stroke-width="1.500"/><path d="M0 ${-4 * dir}L4 0H2V${3 * dir}H-2V0H-4Z" fill="${dir > 0 ? "#1464b4" : "#e0401a"}" stroke="#fff" stroke-width="0.5"/></g>`).join(""));

const zones = [[201,106,2140,70],[572,474,1762,81],[2105,508,56,26],[1850,769,144,70],[1392,1058,143,56],[1093,1153,242,104]];
fill("zones", zones.map(([x, y, w, h]) => `<rect x="${x}" y="${y}" width="${w}" height="${h}" stroke="#ff4f00" stroke-width="2"/>`).join(""));
```
